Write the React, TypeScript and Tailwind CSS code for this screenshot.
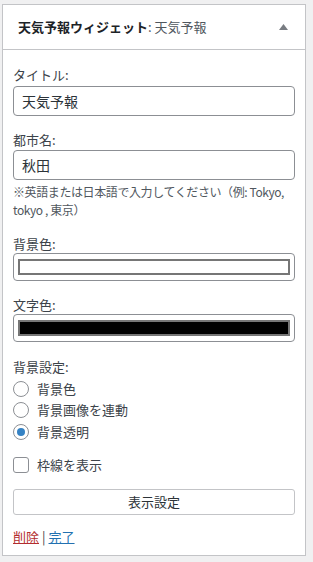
import React from 'react'

const font = { fontFamily: '"Noto Sans CJK JP", "Noto Sans", sans-serif' }

function Label({ text, className = '' }: { text: string; className?: string }) {
  return <div className={`text-[13px] leading-[18px] text-[#3c434a] ${className}`}>{text}</div>
}

function TextInput({ value }: { value: string }) {
  return (
    <div className="h-[30px] w-full rounded-[4px] border border-[#8c8f94] bg-white px-[8px] text-[14px] leading-[28px] text-[#2c3338]">
      {value}
    </div>
  )
}

function ColorInput({ color }: { color: string }) {
  return (
    <div className="h-[28px] w-full rounded-[4px] border border-[#8c8f94] bg-white px-[4px] py-[5px]">
      <div className="h-full w-full border-2 border-[#767676]" style={{ background: color }} />
    </div>
  )
}

function Radio({ label, checked }: { label: string; checked?: boolean }) {
  return (
    <div className="flex h-[21.5px] items-center gap-[8px]">
      <span className="flex h-[16px] w-[16px] items-center justify-center rounded-full border border-[#8c8f94] bg-white">
        {checked && <span className="h-[8px] w-[8px] rounded-full bg-[#3582c4]" />}
      </span>
      <span className="text-[13px] leading-[18px] text-[#3c434a]">{label}</span>
    </div>
  )
}

export default function App() {
  return (
    <div className="h-[562px] w-[313px] bg-[#f0f0f1] pl-[2px] pt-[4px]" style={font}>
      <div className="h-[552px] w-[304px] border border-[#c3c4c7] bg-white">
        {/* header */}
        <div className="flex h-[45px] items-center justify-between border-b border-[#c3c4c7] pl-[15px] pr-[17px]">
          <div className="text-[13px] leading-[18px]">
            <span className="font-semibold text-[#1d2327]">天気予報ウィジェット</span>
            <span className="text-[#50575e]">: 天気予報</span>
          </div>
          <svg width="9" height="6" viewBox="0 0 9 6">
            <path d="M4.5 0 L9 6 L0 6 Z" fill="#787c82" />
          </svg>
        </div>

        {/* body */}
        <div className="px-[10px] pt-[16px]">
          <Label text="タイトル:" className="mb-[2px]" />
          <TextInput value="天気予報" />

          <Label text="都市名:" className="mb-[1px] mt-[15px]" />
          <TextInput value="秋田" />
          <div className="mt-[3px] whitespace-nowrap text-[12px] leading-[18px] tracking-[-0.4px] text-[#50575e]">
            ※英語または日本語で入力してください（例: Tokyo,
            <br />
            tokyo , 東京）
          </div>

          <Label text="背景色:" className="mt-[16px]" />
          <ColorInput color="#ffffff" />

          <Label text="文字色:" className="mt-[15px]" />
          <ColorInput color="#000000" />

          <Label text="背景設定:" className="mb-[2px] mt-[16px]" />
          <Radio label="背景色" />
          <Radio label="背景画像を連動" />
          <Radio label="背景透明" checked />

          <div className="mt-[13px] flex items-center gap-[8px]">
            <span className="h-[16px] w-[16px] rounded-[3px] border border-[#8c8f94] bg-white" />
            <span className="text-[13px] leading-[18px] text-[#3c434a]">枠線を表示</span>
          </div>

          <div className="mt-[15px] flex h-[26px] w-full items-center justify-center rounded-[3px] border border-[#c3c4c7] bg-white text-[13px] text-[#2c3338]">
            表示設定
          </div>

          <div className="mt-[13px] text-[13px] leading-[18px] text-[#3c434a]">
            <span className="text-[#b32d2e] underline">削除</span>
            <span className="px-[3px]">|</span>
            <span className="text-[#2271b1] underline">完了</span>
          </div>
        </div>
      </div>
    </div>
  )
}
